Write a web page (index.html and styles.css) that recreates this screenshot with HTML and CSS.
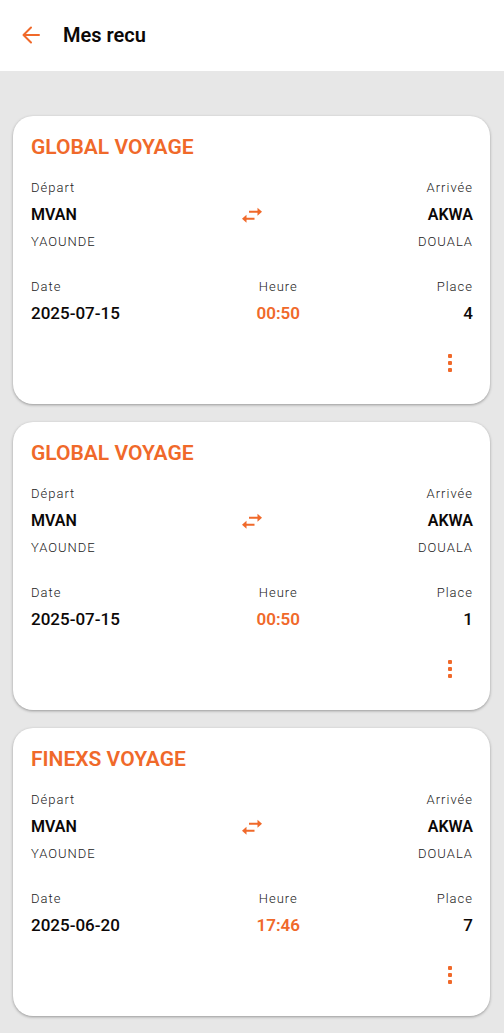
FILE: index.html
```html
<!DOCTYPE html>
<html lang="fr">
<head>
<meta charset="utf-8">
<meta name="viewport" content="width=device-width, initial-scale=1">
<title>Mes recu</title>
<link rel="stylesheet" href="styles.css">
</head>
<body>
<svg class="sprite" aria-hidden="true">
  <symbol id="swap" viewBox="0 0 26 26"><path d="M18.500 5.700V8.700H10v2h8.500v3L23 9.700zM7.500 12.700v3H15.500v2H7.500v3L3 16.700z"/></symbol>
  <symbol id="more" viewBox="0 0 24 24"><rect x="10" y="3" width="4" height="4" rx="1"/><rect x="10" y="10" width="4" height="4" rx="1"/><rect x="10" y="17" width="4" height="4" rx="1"/></symbol>
</svg>
<header class="topbar">
  <button class="icon-button back" type="button" aria-label="Retour"><svg class="icon" viewBox="0 0 24 24"><path class="stroke" d="M20 12H4.500M12 4.500L4.500 12l7.500 7.500"/></svg></button>
  <h1 class="title">Mes recu</h1>
</header>
<main class="list">
  <article class="card">
    <h2 class="agency">GLOBAL VOYAGE</h2>
    <div class="route">
      <div class="stop"><span class="label">Départ</span><strong class="value">MVAN</strong><span class="label">YAOUNDE</span></div>
      <svg class="icon swap" aria-hidden="true"><use href="#swap"/></svg>
      <div class="stop end"><span class="label">Arrivée</span><strong class="value">AKWA</strong><span class="label">DOUALA</span></div>
    </div>
    <div class="details">
      <div class="stop"><span class="label">Date</span><strong class="value number">2025-07-15</strong></div>
      <div class="stop middle"><span class="label">Heure</span><strong class="value number accent">00:50</strong></div>
      <div class="stop end"><span class="label">Place</span><strong class="value number">4</strong></div>
    </div>
    <button class="icon-button more" type="button" aria-label="Options"><svg class="icon"><use href="#more"/></svg></button>
  </article>
  <article class="card">
    <h2 class="agency">GLOBAL VOYAGE</h2>
    <div class="route">
      <div class="stop"><span class="label">Départ</span><strong class="value">MVAN</strong><span class="label">YAOUNDE</span></div>
      <svg class="icon swap" aria-hidden="true"><use href="#swap"/></svg>
      <div class="stop end"><span class="label">Arrivée</span><strong class="value">AKWA</strong><span class="label">DOUALA</span></div>
    </div>
    <div class="details">
      <div class="stop"><span class="label">Date</span><strong class="value number">2025-07-15</strong></div>
      <div class="stop middle"><span class="label">Heure</span><strong class="value number accent">00:50</strong></div>
      <div class="stop end"><span class="label">Place</span><strong class="value number">1</strong></div>
    </div>
    <button class="icon-button more" type="button" aria-label="Options"><svg class="icon"><use href="#more"/></svg></button>
  </article>
  <article class="card">
    <h2 class="agency">FINEXS VOYAGE</h2>
    <div class="route">
      <div class="stop"><span class="label">Départ</span><strong class="value">MVAN</strong><span class="label">YAOUNDE</span></div>
      <svg class="icon swap" aria-hidden="true"><use href="#swap"/></svg>
      <div class="stop end"><span class="label">Arrivée</span><strong class="value">AKWA</strong><span class="label">DOUALA</span></div>
    </div>
    <div class="details">
      <div class="stop"><span class="label">Date</span><strong class="value number">2025-06-20</strong></div>
      <div class="stop middle"><span class="label">Heure</span><strong class="value number accent">17:46</strong></div>
      <div class="stop end"><span class="label">Place</span><strong class="value number">7</strong></div>
    </div>
    <button class="icon-button more" type="button" aria-label="Options"><svg class="icon"><use href="#more"/></svg></button>
  </article>
</main>
</body>
</html>
```

FILE: styles.css
```css
* { box-sizing: border-box; }
body { margin: 0; background: #e7e7e7; color: #0c0807; font-family: Roboto, "Liberation Sans", sans-serif; }
.sprite { display: none; }
.icon { display: block; width: 24px; height: 24px; fill: #f0692a; }
.swap { width: 26px; height: 26px; }
.stroke { fill: none; stroke: #f0692a; stroke-width: 2; stroke-linecap: round; stroke-linejoin: round; }
.icon-button { padding: 0; border: 0; background: none; cursor: pointer; }
.topbar { display: flex; align-items: center; gap: 20px; height: 71px; padding: 0 19px 2px; background: #fff; }
.title { margin: 0; font-size: 20px; line-height: 24px; font-weight: 600; }
.list { display: flex; flex-direction: column; gap: 18px; padding: 45px 14px 16px 13px; }
.card { display: flex; flex-direction: column; padding: 18px 17px 29px 18px; border-radius: 20px; background: #fff; box-shadow: 0 1px 3px rgba(0, 0, 0, 0.35); }
.agency { margin: 0 0 14px; color: #f0692a; font-size: 21px; line-height: 26px; font-weight: 600; }
.route { display: grid; grid-template-columns: 1fr auto 1fr; align-items: center; margin-bottom: 18px; }
.details { display: flex; justify-content: space-between; }
.stop { display: flex; flex-direction: column; }
.end { text-align: right; }
.middle { text-align: center; }
.label { color: #222; font-size: 13px; line-height: 27px; font-weight: 300; letter-spacing: 1px; }
.value { font-size: 16px; line-height: 27px; font-weight: 600; }
.number { font-size: 17px; font-weight: 500; }
.accent { color: #f0692a; font-weight: 600; }
.more { align-self: flex-end; margin-top: 24px; margin-right: 11px; }
```
